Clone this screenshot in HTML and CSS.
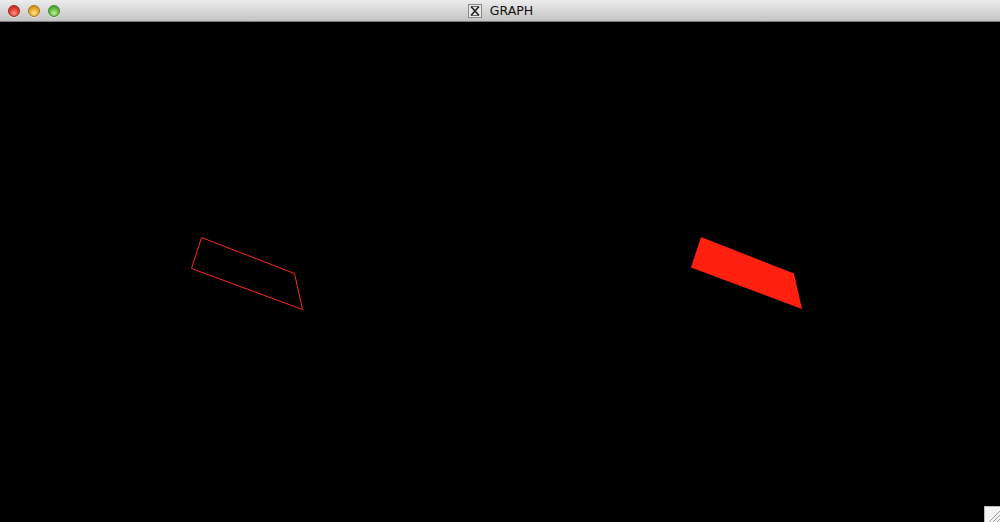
FILE: index.html
```html
<!DOCTYPE html>
<html>
<head>
<meta charset="utf-8">
<link rel="stylesheet" href="styles.css">
</head>
<body>
<div class="window">
  <div class="titlebar">
    <div class="lights">
      <span class="light red"></span>
      <span class="light yellow"></span>
      <span class="light green"></span>
    </div>
    <div class="title">
      <svg class="xicon" width="14" height="14" viewBox="0 0 14 14">
        <rect x="0.5" y="0.5" width="13" height="13" fill="#e8e8e8" stroke="#8a8a8a"/>
        <path d="M3 2.5 L11 11.5 M11 2.5 L3 11.5" stroke="#222" stroke-width="1.6"/>
        <path d="M3.5 2.5 L10 2.5 M3.5 11.5 L10.5 11.5" stroke="#444" stroke-width="0.8"/>
      </svg>
      <span class="title-text">GRAPH</span>
    </div>
  </div>
  <div class="canvas">
    <svg class="drawing" width="1000" height="500" viewBox="0 22 1000 500">
      <polygon points="201.5,237.5 294.5,273.5 302.5,309.5 191.5,268.5" fill="none" stroke="#ff2a1a" stroke-width="1"/>
      <polygon points="701,237 794,273.5 802,309 691,267.5" fill="#ff2010"/>
    </svg>
    <div class="grip">
      <svg width="15" height="15" viewBox="0 0 15 15">
        <path d="M4 15 L15 4 M8 15 L15 8 M12 15 L15 12" stroke="#9a9a9a" stroke-width="1"/>
      </svg>
    </div>
  </div>
</div>
</body>
</html>
```
FILE: styles.css
```css
html, body {
  margin: 0;
  padding: 0;
  background: #000;
  overflow: hidden;
}
.window {
  width: 1000px;
  height: 522px;
  display: flex;
  flex-direction: column;
}
.titlebar {
  height: 22px;
  flex: 0 0 22px;
  box-sizing: border-box;
  background: linear-gradient(#ececec, #d4d4d4 60%, #c4c4c4);
  border-bottom: 1px solid #7a7a7a;
  position: relative;
  display: flex;
  align-items: center;
  justify-content: center;
}
.lights {
  position: absolute;
  left: 8px;
  top: 5px;
  display: flex;
  gap: 8px;
}
.light {
  width: 12px;
  height: 12px;
  border-radius: 50%;
  box-sizing: border-box;
  box-shadow: 0 1px 0 rgba(255,255,255,0.5);
}
.red {
  background: radial-gradient(circle at 50% 70%, #ff9a8c 0%, #e8463b 45%, #b01c16 100%);
  border: 1px solid #a2281f;
}
.yellow {
  background: radial-gradient(circle at 50% 70%, #ffe39a 0%, #f0b034 45%, #b87a10 100%);
  border: 1px solid #a47420;
}
.green {
  background: radial-gradient(circle at 50% 70%, #c8f0a0 0%, #6cc04a 45%, #3c8a22 100%);
  border: 1px solid #3f8a2a;
}
.title {
  display: flex;
  align-items: center;
  gap: 8px;
  margin-left: 1px;
}
.xicon {
  display: block;
}
.title-text {
  font-family: "DejaVu Sans", "Liberation Sans", sans-serif;
  font-size: 12.5px;
  color: #111;
  letter-spacing: 0;
}
.canvas {
  flex: 1;
  position: relative;
  background: #000;
}
.drawing {
  display: block;
}
.grip {
  position: absolute;
  right: 0;
  bottom: 0;
  width: 15px;
  height: 15px;
  background: #f4f4f4;
  border-left: 1px solid #bbb;
  border-top: 1px solid #bbb;
}
.grip svg {
  display: block;
}
```
